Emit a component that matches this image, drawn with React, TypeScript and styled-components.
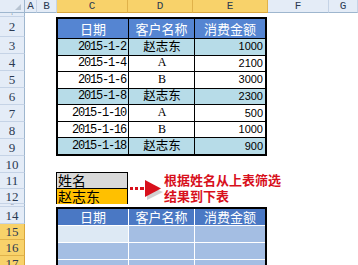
import React from "react";
import styled, { createGlobalStyle } from "styled-components";

const Global = createGlobalStyle`
  html, body { margin: 0; padding: 0; background: #fff; }
  body { width: 358px; height: 265px; overflow: hidden; }
`;

const CJK = `"Noto Sans CJK SC", "Noto Sans", sans-serif`;

const ROWS = [13, 4, 20, 17, 17, 17, 17, 17, 17, 17, 17, 16, 15, 3, 17, 16, 16, 16];
const COLS = [25, 12, 20, 71, 65, 75, 61, 29];

const Sheet = styled.div`
  display: grid;
  grid-template-columns: ${COLS.map((c) => c + "px").join(" ")};
  grid-template-rows: ${ROWS.map((r) => r + "px").join(" ")};
  width: 358px;
  height: 265px;
  overflow: hidden;
  background: #fff;
`;

const Corner = styled.div`
  grid-column: 1;
  grid-row: 1;
  background: #e4ecf7;
  border-right: 1px solid #9eb6ce;
  border-bottom: 1px solid #9eb6ce;
  box-sizing: border-box;
  position: relative;
  &::after {
    content: "";
    position: absolute;
    right: 3px;
    bottom: 2px;
    border-left: 6px solid transparent;
    border-bottom: 6px solid #b8c4d2;
  }
`;

const ColHead = styled.div<{ $col: number; $sel?: boolean }>`
  grid-column: ${(p) => p.$col};
  grid-row: 1;
  background: ${(p) => (p.$sel ? "#f8d26a" : "#e4ecf7")};
  border-right: 1px solid ${(p) => (p.$sel ? "#e0b24a" : "#c5d3e6")};
  border-bottom: 1px solid ${(p) => (p.$sel ? "#d9a63c" : "#9eb6ce")};
  box-sizing: border-box;
  display: flex;
  align-items: center;
  justify-content: center;
  font-family: "Liberation Mono", monospace;
  font-size: 11px;
  color: #2b3a52;
  line-height: 1;
`;

const RowHead = styled.div<{ $row: number; $sel?: boolean; $clip?: boolean }>`
  grid-column: 1;
  grid-row: ${(p) => p.$row};
  background: ${(p) => (p.$sel ? "#f8d26a" : "#e4ecf7")};
  border-right: 1px solid ${(p) => (p.$sel ? "#d9a63c" : "#9eb6ce")};
  border-bottom: 1px solid ${(p) => (p.$sel ? "#e0b24a" : "#c5d3e6")};
  box-sizing: border-box;
  display: flex;
  align-items: ${(p) => (p.$clip ? "flex-end" : "center")};
  justify-content: center;
  overflow: hidden;
  font-family: "Liberation Serif", serif;
  font-size: ${(p) => (p.$clip ? "3px" : "13px")};
  color: #2b3a52;
  line-height: 1;
`;

const TopTable = styled.div`
  grid-column: 4 / 7;
  grid-row: 3 / 11;
  margin-left: -1px;
  margin-right: 1px;
  display: grid;
  grid-template-columns: 70px 65px 1fr;
  grid-template-rows: 19px repeat(7, 1fr);
  gap: 1px;
  background: #000;
  border: 2px solid #000;
  box-sizing: border-box;
`;

const HeadCell = styled.div<{ $dark?: boolean }>`
  background: ${(p) => (p.$dark ? "#4a78c4" : "#5585d2")};
  color: #fff;
  font-family: ${CJK};
  font-size: 13px;
  display: flex;
  align-items: center;
  justify-content: center;
  padding-bottom: 1px;
  line-height: 1;
`;

const Cell = styled.div<{ $hl?: boolean; $align: "left" | "center" | "right"; $kind: "date" | "name" | "num" }>`
  background: ${(p) => (p.$hl ? "#b7dce8" : "#fff")};
  display: flex;
  align-items: center;
  justify-content: ${(p) => (p.$align === "right" ? "flex-end" : p.$align === "center" ? "center" : "flex-start")};
  padding: 0 ${(p) => (p.$kind === "date" ? "2px" : "2px")} ${(p) => (p.$kind === "name" ? "2px" : "0")} 3px;
  color: #000;
  line-height: 1;
  white-space: nowrap;
  font-family: ${(p) =>
    p.$kind === "date" ? `"Liberation Mono", monospace` : p.$kind === "num" ? `"Liberation Sans", Arial, sans-serif` : CJK};
  font-size: ${(p) => (p.$kind === "date" ? "12px" : p.$kind === "num" ? "11px" : "12.5px")};
  letter-spacing: ${(p) => (p.$kind === "date" ? "-1.2px" : "0")};
`;

const Latin = styled.span`
  font-family: "Liberation Serif", serif;
  font-size: 12px;
`;

const NameBox = styled.div`
  grid-column: 4;
  grid-row: 12 / 14;
  display: grid;
  grid-template-rows: 16px 15px;
  border: 1px solid #000;
  margin-top: -1px;
  margin-left: -1px;
  box-sizing: border-box;
`;

const NameCell = styled.div<{ $gold?: boolean }>`
  background: ${(p) => (p.$gold ? "#ffc000" : "#d9d9d9")};
  border-bottom: ${(p) => (p.$gold ? "none" : "1px solid #000")};
  font-family: ${CJK};
  font-size: 14px;
  color: #000;
  display: flex;
  align-items: center;
  padding: 0 0 1px 1px;
  line-height: 1;
`;

const Note = styled.div`
  grid-column: 5 / 8;
  grid-row: 12 / 14;
  display: flex;
  align-items: center;
  gap: 1px;
  margin-left: 1px;
`;

const NoteText = styled.div`
  display: flex;
  flex-direction: column;
  font-family: ${CJK};
  font-weight: 700;
  font-size: 13px;
  line-height: 16px;
  color: #d8101c;
  margin-top: -2px;
`;

const BottomTable = styled.div`
  grid-column: 4 / 7;
  grid-row: 15 / 19;
  margin-left: -1px;
  margin-right: 1px;
  display: grid;
  grid-template-columns: 70px 65px 1fr;
  grid-template-rows: 16px 16px 16px 16px;
  gap: 1px;
  background: #fff;
  border: 2px solid #000;
  border-bottom: none;
  box-sizing: border-box;
`;

const FillCell = styled.div<{ $light?: boolean }>`
  background: ${(p) => (p.$light ? "#dde9f4" : "#a4bee3")};
`;

const Arrow = () => (
  <svg width="34" height="22" viewBox="0 0 34 22">
    <polygon points="17,5 33,12 17,20" fill="#9a9a9a" opacity="0.45" transform="translate(1,2)" />
    <rect x="1" y="9" width="3" height="3" fill="#d8101c" />
    <rect x="6" y="9" width="3" height="3" fill="#d8101c" />
    <rect x="11" y="9" width="4" height="3" fill="#d8101c" />
    <polygon points="16,2 32,10.5 16,19" fill="#d8101c" />
  </svg>
);

const data = [
  { d: "2015-1-2", n: "赵志东", v: "1000", hl: true },
  { d: "2015-1-4", n: "A", v: "2100" },
  { d: "2015-1-6", n: "B", v: "3000" },
  { d: "2015-1-8", n: "赵志东", v: "2300", hl: true },
  { d: "2015-1-10", n: "A", v: "500" },
  { d: "2015-1-16", n: "B", v: "1000" },
  { d: "2015-1-18", n: "赵志东", v: "900", hl: true },
];

const colLetters = ["A", "B", "C", "D", "E", "F", "G"];
const rowLabels = ["1", "2", "3", "4", "5", "6", "7", "8", "9", "10", "11", "12", "13", "14", "15", "16", "17"];

export default function App() {
  return (
    <>
      <Global />
      <Sheet>
        <Corner />
        {colLetters.map((c, i) => (
          <ColHead key={c} $col={i + 2} $sel={i >= 2 && i <= 4}>
            {c}
          </ColHead>
        ))}
        {rowLabels.map((r, i) => (
          <RowHead key={r} $row={i + 2} $sel={i >= 14} $clip={r === "1" || r === "13"}>
            {r}
          </RowHead>
        ))}
        <TopTable>
          <HeadCell>日期</HeadCell>
          <HeadCell>客户名称</HeadCell>
          <HeadCell>消费金额</HeadCell>
          {data.map((r, i) => (
            <React.Fragment key={i}>
              <Cell $hl={r.hl} $align="right" $kind="date">
                {r.d}
              </Cell>
              <Cell $hl={r.hl} $align="center" $kind="name">
                {r.hl ? r.n : <Latin>{r.n}</Latin>}
              </Cell>
              <Cell $hl={r.hl} $align="right" $kind="num">
                {r.v}
              </Cell>
            </React.Fragment>
          ))}
        </TopTable>
        <NameBox>
          <NameCell>姓名</NameCell>
          <NameCell $gold>赵志东</NameCell>
        </NameBox>
        <Note>
          <Arrow />
          <NoteText>
            <span>根据姓名从上表筛选</span>
            <span>结果到下表</span>
          </NoteText>
        </Note>
        <BottomTable>
          <HeadCell $dark>日期</HeadCell>
          <HeadCell $dark>客户名称</HeadCell>
          <HeadCell $dark>消费金额</HeadCell>
          <FillCell $light />
          <FillCell />
          <FillCell />
          <FillCell />
          <FillCell />
          <FillCell />
          <FillCell />
          <FillCell />
          <FillCell />
        </BottomTable>
      </Sheet>
    </>
  );
}
